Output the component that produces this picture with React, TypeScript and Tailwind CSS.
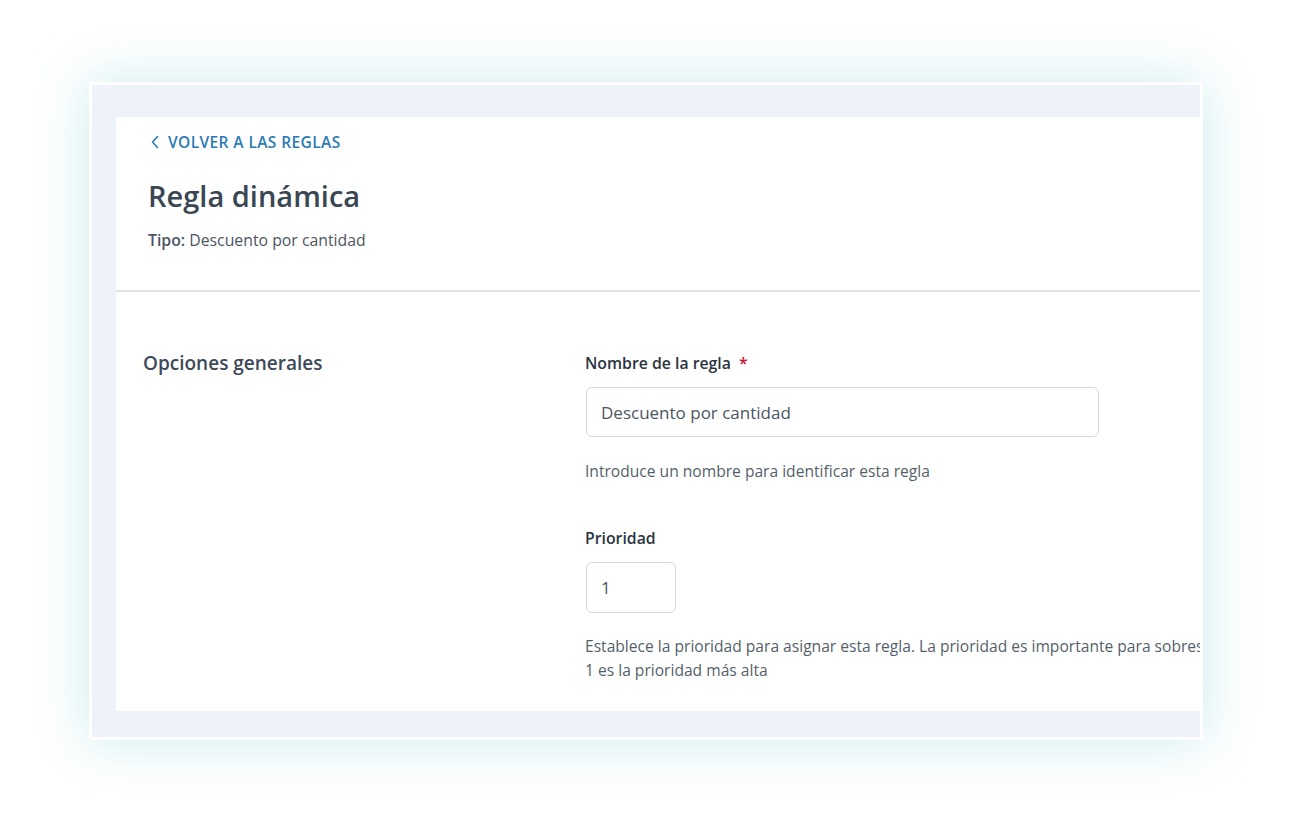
import React from 'react';

const font = { fontFamily: '"Open Sans", "Noto Sans", "Liberation Sans", sans-serif' };

const Field: React.FC<{ label: string; required?: boolean; children: React.ReactNode }> = ({ label, required, children }) => (
  <div>
    <label className="block text-[15.8px] leading-[22px] font-semibold text-[#2b3441] mb-[13px]">
      {label}
      {required && <span className="text-[#d0103a] ml-[8px]">*</span>}
    </label>
    {children}
  </div>
);

export default function App() {
  return (
    <div className="w-[1300px] h-[835px] bg-white pt-[82px] pl-[89px]" style={font}>
      <div className="w-[1114px] h-[658px] border-[3px] border-white bg-[#eef3fb] pt-[32px] pl-[24px] pb-[26px] shadow-[0_0_50px_rgba(140,210,220,0.45)]">
        <div className="h-full bg-white overflow-hidden flex flex-col">
          {/* header */}
          <div className="h-[175px] border-b-2 border-[#e1e3e6] pl-[32px] pt-[14px]">
            <a href="#" className="flex items-center gap-[8px] text-[#2a7ab3] text-[15.5px] font-semibold tracking-[0.4px] uppercase leading-[22px]">
              <svg width="10" height="14" viewBox="0 0 10 14" fill="none" stroke="currentColor" strokeWidth="1.6" className="ml-[2px]">
                <path d="M7.5 1.5 2.5 7l5 5.5" strokeLinecap="round" strokeLinejoin="round" />
              </svg>
              Volver a las reglas
            </a>
            <h1 className="mt-[23px] text-[29px] leading-[40px] font-semibold text-[#3a4654]">Regla dinámica</h1>
            <p className="mt-[13px] text-[15.8px] leading-[22px] text-[#4b5563]">
              <span className="font-semibold">Tipo:</span> Descuento por cantidad
            </p>
          </div>

          {/* body */}
          <div className="flex pt-[58px] pl-[27px]">
            <div className="w-[442px] shrink-0">
              <h2 className="text-[19px] leading-[26px] font-semibold text-[#3d4958]">Opciones generales</h2>
            </div>
            <div className="flex-1 pt-[2px]">
              <Field label="Nombre de la regla" required>
                <input
                  defaultValue="Descuento por cantidad"
                  className="ml-[1px] w-[513px] h-[50px] rounded-[6px] border border-[#d5d8dc] px-[14px] text-[17px] text-[#4b5563] outline-none"
                />
              </Field>
              <p className="mt-[23px] text-[15.6px] leading-[22px] text-[#555f6b]">
                Introduce un nombre para identificar esta regla
              </p>

              <div className="mt-[45px]">
                <Field label="Prioridad">
                  <input
                    defaultValue="1"
                    className="ml-[1px] w-[90px] h-[51px] rounded-[6px] border border-[#d5d8dc] px-[14px] text-[17px] text-[#4b5563] outline-none"
                  />
                </Field>
              </div>
              <p className="mt-[21px] text-[15.6px] leading-[24px] text-[#555f6b] whitespace-nowrap">
                Establece la prioridad para asignar esta regla. La prioridad es importante para sobrescribir reglas que se aplican a los mismos productos.
                <br />
                1 es la prioridad más alta
              </p>
            </div>
          </div>
        </div>
      </div>
    </div>
  );
}
